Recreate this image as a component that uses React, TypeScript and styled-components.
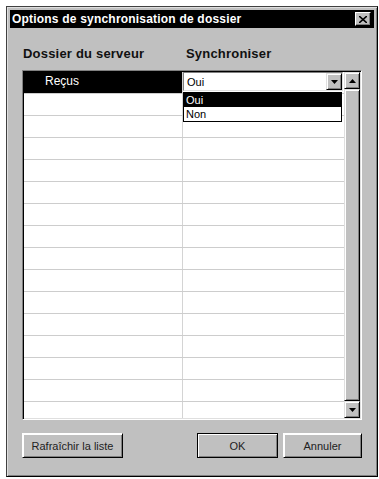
import styled, { createGlobalStyle } from 'styled-components'

const GlobalStyle = createGlobalStyle`
  html, body {
    margin: 0;
    padding: 0;
    background: #fff;
  }
  body {
    font-family: 'Liberation Sans', Arial, sans-serif;
  }
`

const Window = styled.div`
  box-sizing: border-box;
  width: 372px;
  height: 471px;
  margin: 6px 0 0 6px;
  padding: 3px;
  background: #c0c0c0;
  border-top: 1px solid #404040;
  border-left: 1px solid #404040;
  border-right: 1px solid #000;
  border-bottom: 1px solid #000;
  box-shadow: inset 1px 1px #dfdfdf, inset -1px -1px #808080;
  display: flex;
  flex-direction: column;
`

const TitleBar = styled.div`
  height: 18px;
  background: #000;
  display: flex;
  align-items: center;
  justify-content: space-between;
  padding: 0 3px 0 2px;
`

const TitleText = styled.span`
  color: #fff;
  font-weight: bold;
  font-size: 12px;
  letter-spacing: 0.2px;
`

const CloseButton = styled.div`
  box-sizing: border-box;
  width: 16px;
  height: 14px;
  background: #c0c0c0;
  border-top: 1px solid #fff;
  border-left: 1px solid #fff;
  border-right: 1px solid #000;
  border-bottom: 1px solid #000;
  box-shadow: inset -1px -1px #808080;
  display: flex;
  align-items: center;
  justify-content: center;
`

const Body = styled.div`
  padding: 0 0 0 12px;
  display: flex;
  flex-direction: column;
`

const HeaderRow = styled.div`
  display: flex;
  margin-top: 17px;
  height: 16px;
  align-items: center;
`

const HeaderLabel = styled.span<{ $width: number }>`
  width: ${({ $width }) => $width}px;
  padding-left: 1px;
  font-size: 13px;
  font-weight: bold;
  letter-spacing: 0.2px;
  color: #111;
`

const Grid = styled.div`
  box-sizing: border-box;
  margin-top: 9px;
  width: 340px;
  height: 350px;
  border-top: 1px solid #808080;
  border-left: 1px solid #808080;
  border-right: 1px solid #fff;
  border-bottom: 1px solid #fff;
  box-shadow: inset 1px 1px #000, inset -1px -1px #dfdfdf;
  padding: 1px;
  display: flex;
`

const ListArea = styled.div`
  flex: 1;
  background: #fff;
  overflow: hidden;
  display: flex;
  flex-direction: column;
`

const Row = styled.div`
  box-sizing: border-box;
  flex: 0 0 22px;
  display: flex;
  border-bottom: 1px solid #cdcdcd;
`

const NameCell = styled.div<{ $selected?: boolean }>`
  width: 159px;
  border-right: 1px solid #d4d4d4;
  background: ${({ $selected }) => ($selected ? '#000' : '#fff')};
  color: #fff;
  font-size: 12px;
  padding-left: 21px;
  box-sizing: border-box;
  display: flex;
  align-items: center;
  padding-bottom: 3px;
`

const ValueCell = styled.div`
  flex: 1;
  position: relative;
`

const Combo = styled.div`
  box-sizing: border-box;
  height: 19px;
  width: 160px;
  background: #fff;
  border-top: 1px solid #808080;
  border-left: 1px solid #808080;
  border-right: 1px solid #dfdfdf;
  border-bottom: 1px solid #dfdfdf;
  display: flex;
  align-items: center;
  justify-content: space-between;
  padding-left: 3px;
  font-size: 11px;
  color: #000;
`

const ArrowButton = styled.div<{ $height: number }>`
  box-sizing: border-box;
  width: 16px;
  height: ${({ $height }) => $height}px;
  background: #c0c0c0;
  border-top: 1px solid #dfdfdf;
  border-left: 1px solid #dfdfdf;
  border-right: 1px solid #000;
  border-bottom: 1px solid #000;
  box-shadow: inset 1px 1px #fff, inset -1px -1px #808080;
  display: flex;
  align-items: center;
  justify-content: center;
  flex-shrink: 0;
`

const DropList = styled.div`
  position: absolute;
  top: 20px;
  left: 0;
  width: 159px;
  box-sizing: border-box;
  border: 1px solid #000;
  background: #fff;
  z-index: 2;
`

const DropItem = styled.div<{ $selected?: boolean }>`
  height: 14px;
  line-height: 14px;
  padding-left: 2px;
  font-size: 11px;
  background: ${({ $selected }) => ($selected ? '#000' : '#fff')};
  color: ${({ $selected }) => ($selected ? '#fff' : '#000')};
`

const ScrollBar = styled.div`
  width: 16px;
  display: flex;
  flex-direction: column;
  background: #c0c0c0;
`

const Thumb = styled.div`
  flex: 1;
  box-sizing: border-box;
  background: #c0c0c0;
  border-top: 1px solid #dfdfdf;
  border-left: 1px solid #dfdfdf;
  border-right: 1px solid #000;
  border-bottom: 1px solid #000;
  box-shadow: inset 1px 1px #fff, inset -1px -1px #808080;
`

const ButtonRow = styled.div`
  width: 340px;
  margin-top: 13px;
  display: flex;
  justify-content: space-between;
`

const ButtonGroup = styled.div`
  display: flex;
  gap: 5px;
`

const Button = styled.div<{ $width: number; $default?: boolean }>`
  box-sizing: border-box;
  width: ${({ $width }) => $width}px;
  height: 25px;
  background: #c0c0c0;
  border: 1px solid #000;
  border-top-color: ${({ $default }) => ($default ? '#000' : '#fff')};
  border-left-color: ${({ $default }) => ($default ? '#000' : '#fff')};
  box-shadow: inset 1px 1px #fff, inset -1px -1px #808080;
  display: flex;
  align-items: center;
  justify-content: center;
  font-size: 11px;
  color: #222;
`

const DownArrow = () => (
  <svg width='7' height='4' viewBox='0 0 7 4'>
    <path d='M0 0h7L3.5 4z' fill='#000' />
  </svg>
)

const UpArrow = () => (
  <svg width='7' height='4' viewBox='0 0 7 4'>
    <path d='M0 4h7L3.5 0z' fill='#000' />
  </svg>
)

const rows = Array.from({ length: 15 })

export default function App() {
  return (
    <>
      <GlobalStyle />
      <Window>
        <TitleBar>
          <TitleText>Options de synchronisation de dossier</TitleText>
          <CloseButton>
            <svg width='8' height='7' viewBox='0 0 8 7'>
              <path d='M0 0L8 7M8 0L0 7' stroke='#000' strokeWidth='1.6' />
            </svg>
          </CloseButton>
        </TitleBar>
        <Body>
          <HeaderRow>
            <HeaderLabel $width={162}>Dossier du serveur</HeaderLabel>
            <HeaderLabel $width={160}>Synchroniser</HeaderLabel>
          </HeaderRow>
          <Grid>
            <ListArea>
              <Row>
                <NameCell $selected>Reçus</NameCell>
                <ValueCell>
                  <Combo>
                    <span>Oui</span>
                    <ArrowButton $height={17}>
                      <DownArrow />
                    </ArrowButton>
                  </Combo>
                  <DropList>
                    <DropItem $selected>Oui</DropItem>
                    <DropItem>Non</DropItem>
                  </DropList>
                </ValueCell>
              </Row>
              {rows.map((_, i) => (
                <Row key={i}>
                  <NameCell />
                  <ValueCell />
                </Row>
              ))}
            </ListArea>
            <ScrollBar>
              <ArrowButton $height={17}>
                <UpArrow />
              </ArrowButton>
              <Thumb />
              <ArrowButton $height={17}>
                <DownArrow />
              </ArrowButton>
            </ScrollBar>
          </Grid>
          <ButtonRow>
            <Button $width={101}>Rafraîchir la liste</Button>
            <ButtonGroup>
              <Button $width={81} $default>
                OK
              </Button>
              <Button $width={79}>Annuler</Button>
            </ButtonGroup>
          </ButtonRow>
        </Body>
      </Window>
    </>
  )
}
